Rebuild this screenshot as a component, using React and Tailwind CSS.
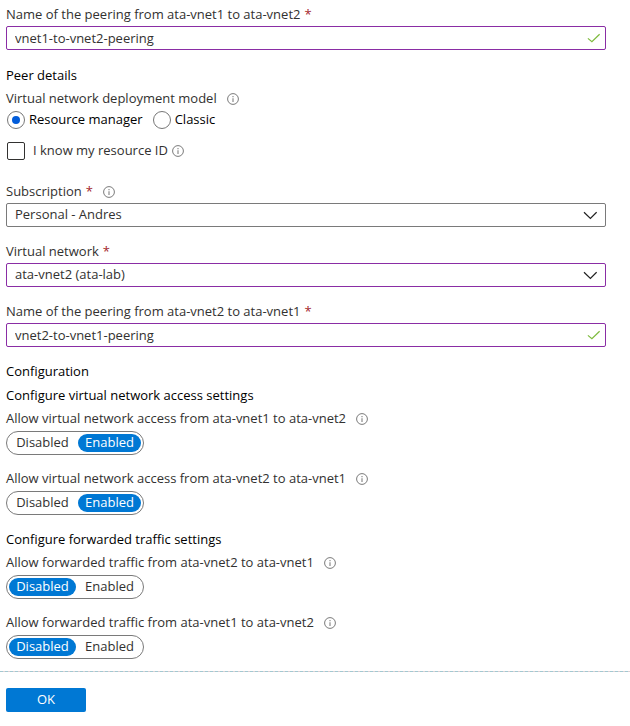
import { useId } from "react";

function InfoIcon() {
  return (
    <svg className="h-3 w-3 shrink-0" viewBox="0 0 12 12" fill="none" aria-hidden="true">
      <circle cx="6" cy="6" r="5.4" stroke="#7a7a7a" strokeWidth="1" />
      <path d="M6 5.2V9" stroke="#8a8a8a" strokeWidth="1.2" />
      <path d="M6 3v1.3" stroke="#8a8a8a" strokeWidth="1.2" />
    </svg>
  );
}

function Required() {
  return <span className="ml-1 text-[#a4262c]">*</span>;
}

function Heading({ children }) {
  return <h2 className="h-6 text-[13px] leading-6 text-black">{children}</h2>;
}

function LabelRow({ htmlFor, required, info, children }) {
  return (
    <div className="flex h-6 items-center gap-2.5 pt-px">
      <label htmlFor={htmlFor}>
        {children}
        {required && <Required />}
      </label>
      {info && <InfoIcon />}
    </div>
  );
}

function TextField({ label, value }) {
  const id = useId();
  return (
    <div>
      <LabelRow htmlFor={id} required>{label}</LabelRow>
      <div className="flex h-6 items-center rounded-xs border border-[#8a2da5] pr-1 pl-2">
        <input id={id} type="text" defaultValue={value} className="h-full min-w-0 flex-1 outline-none" />
        <svg className="h-3 w-4 shrink-0" viewBox="0 0 16 12" fill="none" aria-hidden="true">
          <path d="M2.9 6.4 6.9 9.6 14.6 2.2" stroke="#7dba3c" strokeWidth="1.2" />
        </svg>
      </div>
    </div>
  );
}

function SelectField({ label, value, info, border }) {
  const id = useId();
  return (
    <div>
      <LabelRow htmlFor={id} required info={info}>{label}</LabelRow>
      <div className={`grid h-6 items-center rounded-xs border ${border}`}>
        <select id={id} className="col-start-1 row-start-1 h-full w-full appearance-none pl-2 outline-none">
          <option>{value}</option>
        </select>
        <svg
          className="pointer-events-none col-start-1 row-start-1 mr-2 h-3 w-3.5 justify-self-end"
          viewBox="0 0 14 12"
          fill="none"
          aria-hidden="true"
        >
          <path d="M1 3.2 7.4 9.4 13.6 3.2" stroke="#222" strokeWidth="1.2" />
        </svg>
      </div>
    </div>
  );
}

function Toggle({ label, value }) {
  const name = useId();
  return (
    <fieldset>
      <legend className="flex h-6 items-center gap-2.5">
        {label}
        <InfoIcon />
      </legend>
      <div className="flex h-6 w-fit gap-0.5 rounded-full border border-[#7a7a7a] p-0.5">
        {["Disabled", "Enabled"].map((option) => (
          <label
            key={option}
            className={`relative flex items-center justify-center rounded-full has-checked:bg-[#0078d4] has-checked:text-white ${
              option === "Disabled" ? "w-[67px]" : "w-[63px]"
            }`}
          >
            <input type="radio" name={name} defaultChecked={option === value} className="sr-only" />
            {option}
          </label>
        ))}
      </div>
    </fieldset>
  );
}

function Radio({ label, name, checked }) {
  return (
    <label className="flex items-center gap-1 text-black">
      <input
        type="radio"
        name={name}
        defaultChecked={checked}
        className="h-[18px] w-[18px] appearance-none rounded-full border border-[#777] bg-clip-content p-1 checked:bg-[#015cda]"
      />
      {label}
    </label>
  );
}

export default function App() {
  return (
    <form className="bg-white pt-0.5 font-['Open_Sans','Noto_Sans',sans-serif] text-[13px] text-[#323130]">
      <div className="flex flex-col gap-3 pr-6 pb-3 pl-1.5">
        <TextField label="Name of the peering from ata-vnet1 to ata-vnet2" value="vnet1-to-vnet2-peering" />

        <section className="pt-px">
          <Heading>Peer details</Heading>
          <fieldset>
            <legend className="flex h-6 items-center gap-2.5">
              Virtual network deployment model
              <InfoIcon />
            </legend>
            <div className="flex h-[18px] items-center gap-2.5 pl-px">
              <Radio label="Resource manager" name="model" checked />
              <Radio label="Classic" name="model" />
            </div>
          </fieldset>
          <div className="mt-3 mb-1.5 flex h-5 items-center gap-1 pl-px">
            <label className="flex items-center gap-2">
              <input
                type="checkbox"
                className="h-[18px] w-[18px] appearance-none rounded-xs border border-[#323130] checked:bg-[#0078d4]"
              />
              I know my resource ID
            </label>
            <InfoIcon />
          </div>
        </section>

        <SelectField label="Subscription" value="Personal - Andres" info border="border-[#7a7a7a]" />
        <SelectField label="Virtual network" value="ata-vnet2 (ata-lab)" border="border-[#8a2da5]" />
        <TextField label="Name of the peering from ata-vnet2 to ata-vnet1" value="vnet2-to-vnet1-peering" />

        <section>
          <Heading>Configuration</Heading>
          <Heading>Configure virtual network access settings</Heading>
          <div className="flex flex-col gap-3">
            <Toggle label="Allow virtual network access from ata-vnet1 to ata-vnet2" value="Enabled" />
            <Toggle label="Allow virtual network access from ata-vnet2 to ata-vnet1" value="Enabled" />
          </div>
        </section>

        <section>
          <Heading>Configure forwarded traffic settings</Heading>
          <div className="flex flex-col gap-3">
            <Toggle label="Allow forwarded traffic from ata-vnet2 to ata-vnet1" value="Disabled" />
            <Toggle label="Allow forwarded traffic from ata-vnet1 to ata-vnet2" value="Disabled" />
          </div>
        </section>
      </div>

      <hr className="h-px border-0 bg-[repeating-linear-gradient(90deg,#a3c8d0_0_3px,#dccfd4_3px_5px)]" />
      <footer className="px-1.5 py-4">
        <button type="button" className="h-6 w-20 rounded-xs bg-[#0078d4] text-white">OK</button>
      </footer>
    </form>
  );
}
